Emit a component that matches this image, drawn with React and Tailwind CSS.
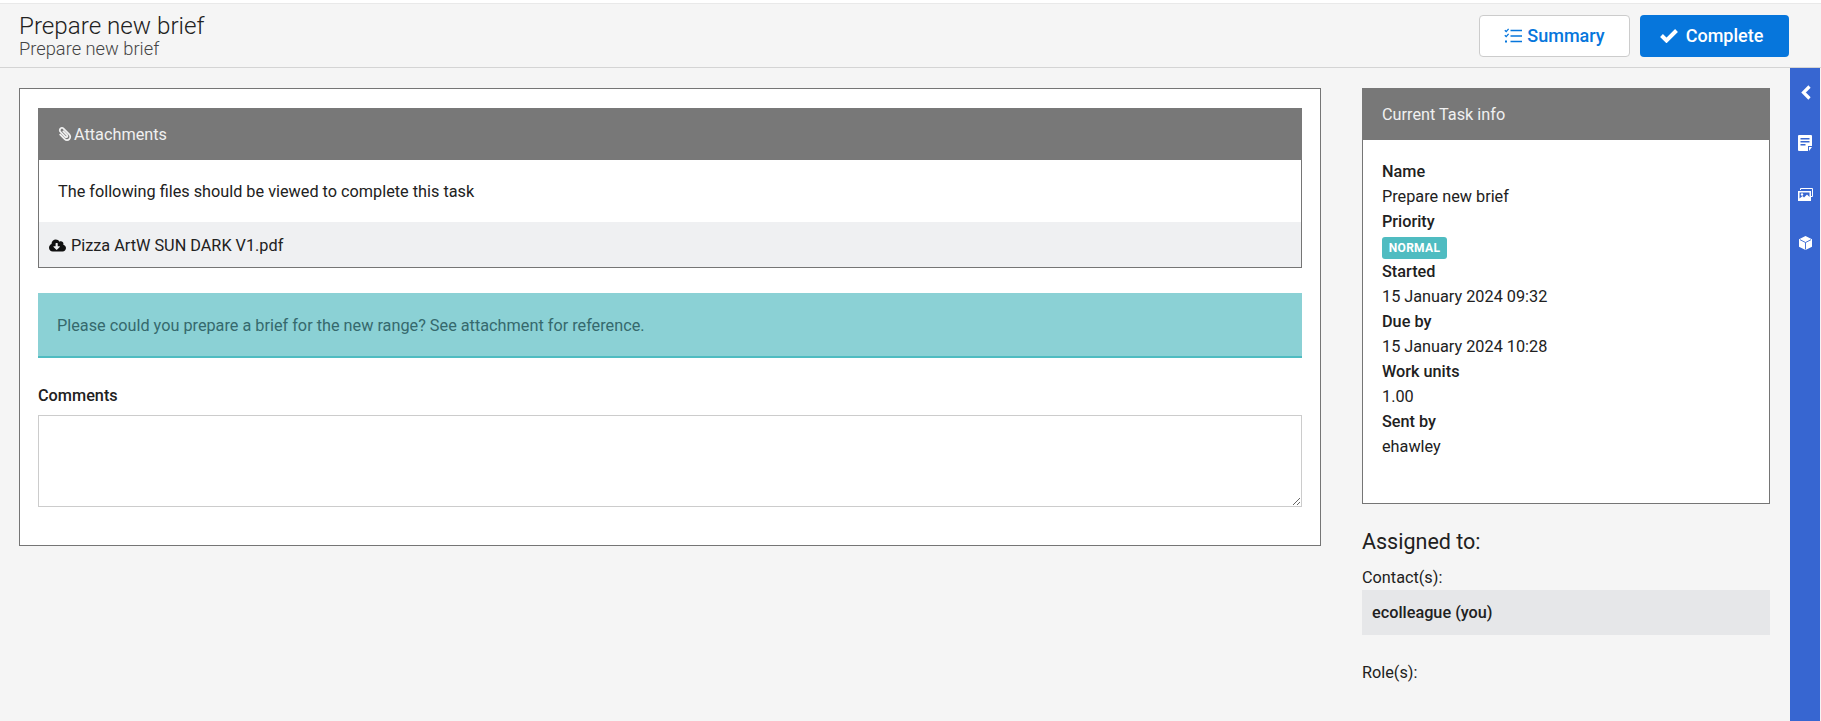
import React from "react";
import { FaCloudDownloadAlt, FaPaperclip } from "react-icons/fa";

const ListCheck = () => (
  <svg width="18" height="15" viewBox="0 0 18 15" fill="none" stroke="currentColor" strokeWidth="1.3">
    <path d="M.8 2.300l1.400 1.300L4.600.8M.8 7.300l1.400 1.300 2.400-2.800" />
    <path d="M6.500 2.500h11.500M6.500 8h11.500M6.500 13.500h11.500" />
    <path d="M1 13.500h2" strokeWidth="2" />
  </svg>
);

const CheckIcon = () => (
  <svg width="18" height="15" viewBox="0 0 18 15" fill="none" stroke="currentColor" strokeWidth="4">
    <path d="M1.500 7.500l5 5L16.500 2.500" />
  </svg>
);

const ChevronIcon = () => (
  <svg width="11" height="15" viewBox="0 0 11 15" fill="none" stroke="currentColor" strokeWidth="3.200">
    <path d="M9.500 1.500l-6 6 6 6" />
  </svg>
);

const NoteIcon = () => (
  <svg width="14" height="16" viewBox="0 0 14 16">
    <path fill="#fff" d="M0 1a1 1 0 0 1 1-1h12a1 1 0 0 1 1 1v10l-4 0v5H1a1 1 0 0 1-1-1z" />
    <path fill="#fff" d="M11 12h3l-3 4z" />
    <path fill="#3766d1" d="M2.500 3h9v1.400h-9zM2.500 6h9v1.400h-9zM2.500 9h5v1.400h-5z" />
  </svg>
);

const ImagesIcon = () => (
  <svg width="15" height="13" viewBox="0 0 15 13">
    <path fill="none" stroke="#fff" d="M2.500 2V.5h12v8H13" />
    <path fill="#fff" d="M0 3h13v10H0z" />
    <path fill="#3766d1" d="M1.500 4.500h10v4.500l-2.500-2.500-3 3-1.500-1.500-3 2.500z" />
    <circle cx="4" cy="6.500" r="1.200" fill="#fff" />
  </svg>
);

const CubeIcon = () => (
  <svg width="13" height="14" viewBox="0 0 13 14">
    <path fill="#fff" d="M6.500 0L13 3.200v7.600L6.500 14 0 10.800V3.200z" />
    <path fill="none" stroke="#3766d1" strokeWidth="0.900" d="M1 3.700l5.500 2.800 5.500-2.800M6.500 6.500V13.500" />
  </svg>
);

const Info = ({ label, children }) => (
  <>
    <div className="font-medium">{label}</div>
    <div>{children}</div>
  </>
);

export default function App() {
  return (
    <div className="h-[721px] overflow-hidden bg-white pt-[3px] font-['Roboto',sans-serif] text-[16.25px] leading-[25px] text-[#212121]">
      <header className="flex h-[65px] items-center justify-between border-t border-b border-t-[#e9e9e9] border-b-[#d4d4d4] bg-[#f5f5f5] pl-[19px] pr-[32px]">
        <div>
          <h1 className="text-[24.200px] leading-[27px] font-light">Prepare new brief</h1>
          <div className="-mt-px text-[18.300px] leading-[20px] font-light text-[#444]">Prepare new brief</div>
        </div>
        <div className="flex gap-[10px]">
          <button className="flex h-[42px] w-[151px] items-center justify-center gap-[5px] rounded border border-[#ccc] bg-white text-[18px] font-medium text-[#0676dc]">
            <ListCheck /> Summary
          </button>
          <button className="flex h-[42px] w-[149px] items-center justify-center gap-[8px] rounded bg-[#0676dc] pr-[6px] text-[18px] font-medium text-white">
            <CheckIcon /> Complete
          </button>
        </div>
      </header>

      <div className="flex h-[653px] bg-[#f5f5f5]">
        <main className="flex min-w-0 flex-1 items-start gap-[41px] pt-[20px] pl-[19px] pr-[20px]">
          <section className="w-[1302px] border border-[#757575] bg-white px-[18px] pt-[19px] pb-[38px]">
            <div className="border border-[#757575]">
              <div className="-mx-px -mt-px flex h-[52px] items-center gap-[2px] bg-[#787878] px-[20px] text-[#f0f0f0]">
                <FaPaperclip size={14} className="-scale-x-100" /> Attachments
              </div>
              <div className="flex h-[62px] items-center px-[19px] pt-[1px]">The following files should be viewed to complete this task</div>
              <div className="flex h-[45px] items-center gap-[5px] bg-[#eff0f2] px-[10px] pt-[1px]">
                <FaCloudDownloadAlt size={17} className="text-[#111]" /> Pizza ArtW SUN DARK V1.pdf
              </div>
            </div>
            <div className="mt-[25px] flex h-[65px] items-center border-b-2 border-[#4fbcc1] bg-[#8bd1d5] px-[19px] pt-[1px] text-[#35696d]">
              Please could you prepare a brief for the new range? See attachment for reference.
            </div>
            <div className="mt-[25px] font-medium">Comments</div>
            <textarea className="mt-[7px] block h-[92px] w-full border border-[#ccc] bg-white" />
          </section>

          <aside className="w-[408px] shrink-0">
            <div className="h-[416px] border border-[#757575] bg-white">
              <div className="-mx-px -mt-px flex h-[52px] items-center bg-[#787878] px-[20px] text-[#f0f0f0]">Current Task info</div>
              <div className="px-[19px] pt-[19px]">
                <Info label="Name">Prepare new brief</Info>
                <Info label="Priority">
                  <div className="flex h-[25px] items-end">
                    <span className="flex h-[22px] w-[65px] items-center justify-center rounded-[3px] bg-[#4fbcc1] text-[12px] font-bold tracking-wide text-white">NORMAL</span>
                  </div>
                </Info>
                <Info label="Started">15 January 2024 09:32</Info>
                <Info label="Due by">15 January 2024 10:28</Info>
                <Info label="Work units">1.00</Info>
                <Info label="Sent by">ehawley</Info>
              </div>
            </div>
            <h2 className="mt-[24px] text-[21.500px] leading-[28px]">Assigned to:</h2>
            <div className="mt-[9px]">Contact(s):</div>
            <div className="flex h-[45px] items-center bg-[#e6e7e9] px-[10px] font-medium">ecolleague (you)</div>
            <div className="mt-[25px]">Role(s):</div>
          </aside>
        </main>

        <nav className="mr-px flex w-[30px] shrink-0 flex-col items-center bg-[#3766d1] pt-[17px] text-white">
          <ChevronIcon />
          <div className="mt-[35px] h-[16px]"><NoteIcon /></div>
          <div className="mt-[37px] h-[13px]"><ImagesIcon /></div>
          <div className="mt-[35px]"><CubeIcon /></div>
        </nav>
      </div>
    </div>
  );
}
